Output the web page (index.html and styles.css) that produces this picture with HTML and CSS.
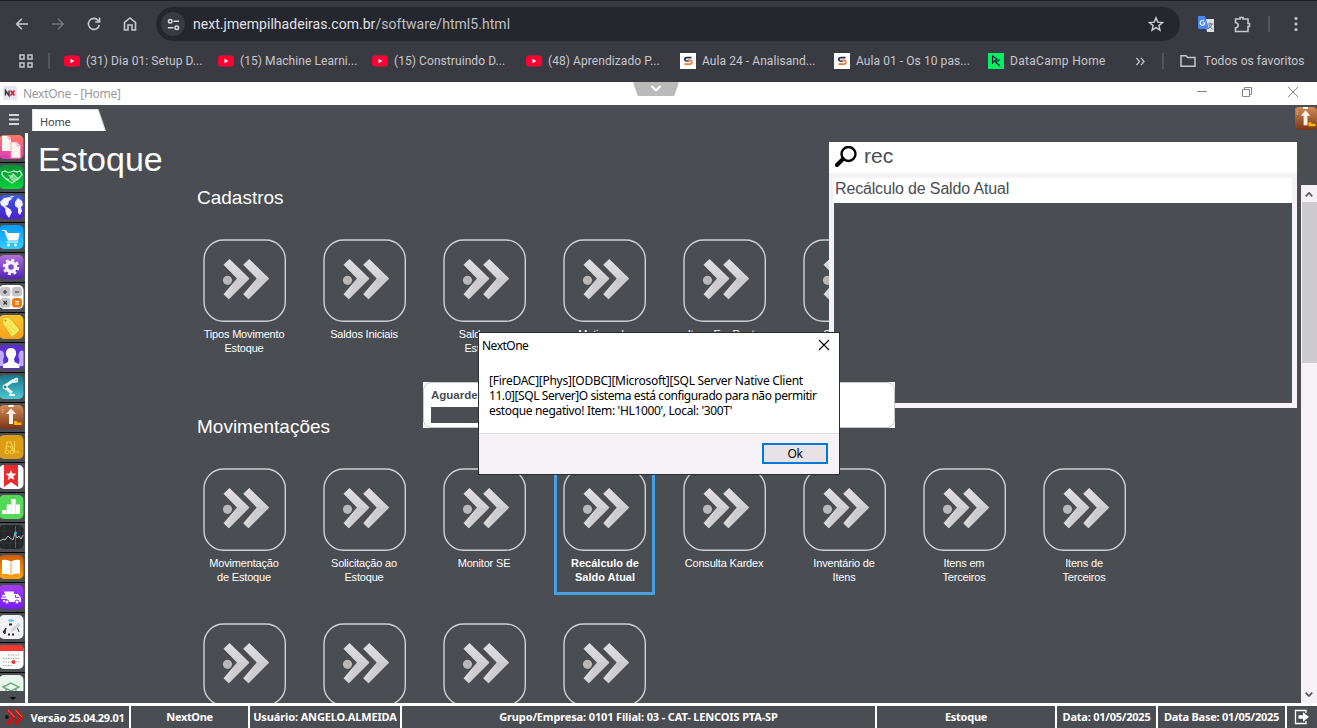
FILE: index.html
```html
<!DOCTYPE html>
<html lang="pt-BR">
<head>
<meta charset="utf-8">
<title>NextOne</title>
<link rel="stylesheet" href="styles.css">
</head>
<body>
<svg class="defs" aria-hidden="true">
  <defs>
    <linearGradient id="steel" x1="0" y1="0" x2="0" y2="1"><stop offset="0" stop-color="#e2dfe2"/><stop offset=".5" stop-color="#d2cfd1"/><stop offset="1" stop-color="#dedbdd"/></linearGradient>
    <linearGradient id="pink" x1="0" y1="0" x2="0" y2="1"><stop offset="0" stop-color="#ff7a62"/><stop offset="1" stop-color="#e13cb8"/></linearGradient>
    <linearGradient id="green" x1="0" y1="0" x2="0" y2="1"><stop offset="0" stop-color="#0a8f35"/><stop offset="1" stop-color="#06d43c"/></linearGradient>
    <linearGradient id="indigo" x1="0" y1="0" x2="0" y2="1"><stop offset="0" stop-color="#3a5be0"/><stop offset="1" stop-color="#4a1fd0"/></linearGradient>
    <linearGradient id="sky" x1="0" y1="0" x2="0" y2="1"><stop offset="0" stop-color="#0099f8"/><stop offset="1" stop-color="#35ccff"/></linearGradient>
    <linearGradient id="violet" x1="0" y1="0" x2="0" y2="1"><stop offset="0" stop-color="#b070d8"/><stop offset="1" stop-color="#5222b8"/></linearGradient>
    <linearGradient id="amber" x1="0" y1="0" x2="0" y2="1"><stop offset="0" stop-color="#f9c52c"/><stop offset="1" stop-color="#f8a01c"/></linearGradient>
    <linearGradient id="teal" x1="0" y1="0" x2="0" y2="1"><stop offset="0" stop-color="#1c7488"/><stop offset="1" stop-color="#4cc8d4"/></linearGradient>
    <linearGradient id="brown" x1="0" y1="0" x2="0" y2="1"><stop offset="0" stop-color="#d08a55"/><stop offset="1" stop-color="#7a3518"/></linearGradient>
    <linearGradient id="orange" x1="0" y1="0" x2="0" y2="1"><stop offset="0" stop-color="#d05a08"/><stop offset="1" stop-color="#ffa502"/></linearGradient>
    <linearGradient id="purple" x1="0" y1="0" x2="0" y2="1"><stop offset="0" stop-color="#a43df5"/><stop offset="1" stop-color="#7a1cf8"/></linearGradient>
    <symbol id="chev" viewBox="0 0 84 84">
      <rect x="1" y="1" width="81.300" height="81.300" rx="19.500" fill="none" stroke="#d0cfd1" stroke-width="1.400"/>
      <circle cx="24.500" cy="41.300" r="4.600" fill="#b9b6b8"/>
      <g id="arrow"><path d="M26.500 20 46.500 39.500 25.800 60.300 20.500 55.300 34 39.500 20.500 25.800Z" fill="url(#steel)"/><path d="M34 39.500H46.500L25.800 60.300 24 58.500Z" fill="#c6c3c5" opacity=".5"/></g>
      <use href="#arrow" x="19.700"/>
    </symbol>
    <symbol id="yt" viewBox="0 0 16 16"><rect y="2.500" width="16" height="11" rx="3" fill="#ff0033"/><path d="M6.500 5.800v4.400L10.300 8Z" fill="#fff"/></symbol>
    <symbol id="aula" viewBox="0 0 16 16"><path fill="#fff" d="M0 0h16v16H0z"/><path d="M11.500 4.700H7C4.200 4.700 4.200 8 6.500 8H9" fill="none" stroke="#292a5a" stroke-width="1.700"/><path d="M7.500 7.300H10c2.400 0 2.400 3.900 0 3.900H4.500" fill="none" stroke="#f47a30" stroke-width="1.700"/></symbol>
    <symbol id="upbox" viewBox="0 0 24 24">
      <rect x="-1" width="24.500" height="24" rx="5" fill="url(#brown)"/><path d="M8.500 0h5v2h-5z" fill="#fff"/><path d="M11 3.500 16 9h-3v10H9V9H6Z" fill="#fff3e8"/><path d="M14 16h3v1.500h4.500V20H14Z" fill="#ffb400"/><path d="M2.500 4v4" stroke="#e3ad87" stroke-width="1.500" stroke-dasharray="1.500 1"/>
    </symbol>
  </defs>
</svg>

<header class="browser">
  <div class="toolbar">
    <svg class="nav" viewBox="0 0 16 16"><path d="M14 8H3M8 2.700 2.700 8 8 13.300"/></svg>
    <svg class="nav dim" viewBox="0 0 16 16"><path d="M2 8h11M8 2.700 13.300 8 8 13.300"/></svg>
    <svg class="nav" viewBox="0 0 16 16"><path d="M13.300 8.800A5.500 5.500 0 1 1 12 4.200L13.500 6M13.600 1.500V6H9.200"/></svg>
    <svg class="nav" viewBox="0 0 16 16"><path d="M2.500 14V6.500L8 2l5.500 4.500V14H10V9H6v5Z"/></svg>
    <div class="address">
      <span class="site"><svg viewBox="0 0 16 16"><circle cx="4.500" cy="4.500" r="1.900"/><path d="M8 4.500h6M2 11.500h6"/><circle cx="11.500" cy="11.500" r="1.900"/></svg></span>
      <span class="url">next.jmempilhadeiras.com.br<span>/software/html5.html</span></span>
      <svg class="star" viewBox="0 0 16 16"><path d="m8 1.800 1.800 4.300 4.700.4-3.600 3.100 1.100 4.600L8 11.700l-4 2.500 1.100-4.600L1.500 6.500l4.700-.4Z"/></svg>
    </div>
    <svg class="translate" viewBox="0 0 16 16"><path d="M7 3h9v13H9Z" fill="#dcdee2"/><path d="M0 0h7l4 13H1.500Q0 13 0 11.500Z" fill="#4a86f0"/><path d="M9.500 8H15M12.200 6.500V8M14 8q-1 3-3.500 4.500M11 9q1 2.500 3.500 4" fill="none" stroke="#68707c"/><path d="M6.200 5.200A2.400 2.400 0 1 0 6.900 7H4.700" fill="none" stroke="#fff" stroke-width="1.100"/></svg>
    <svg class="ext" viewBox="0 0 17 17"><path d="M1.500 3H6V1.500h3V3h5v4.500h1.500v3H14V15.500H1.500V12Q4.200 11.500 4.200 9.300T1.500 6.500Z"/></svg>
    <i class="rule"></i>
    <svg class="dots" viewBox="0 0 4 16"><circle cx="2" cy="2.500" r="1.600"/><circle cx="2" cy="8" r="1.600"/><circle cx="2" cy="13.500" r="1.600"/></svg>
  </div>
  <nav class="bookmarks">
    <svg class="apps" viewBox="0 0 14 14"><path d="M1 1h4v4H1zM9 1h4v4H9zM1 9h4v4H1zM9 9h4v4H9z"/></svg>
    <i class="rule"></i>
    <a class="bm"><svg><use href="#yt"/></svg><span>(31) Dia 01: Setup D...</span></a>
    <a class="bm"><svg><use href="#yt"/></svg><span>(15) Machine Learni...</span></a>
    <a class="bm"><svg><use href="#yt"/></svg><span>(15) Construindo D...</span></a>
    <a class="bm"><svg><use href="#yt"/></svg><span>(48) Aprendizado P...</span></a>
    <a class="bm"><svg><use href="#aula"/></svg><span>Aula 24 - Analisand...</span></a>
    <a class="bm"><svg><use href="#aula"/></svg><span>Aula 01 - Os 10 pas...</span></a>
    <a class="bm camp"><svg viewBox="0 0 16 16"><path fill="#03ef62" d="M0 0h16v16H0z"/><path d="M4.500 11V3l4.500 3-4.500 3.500M12 6.500 7.500 9l4.500 4" fill="none" stroke="#05192d" stroke-width="1.100"/></svg><span>DataCamp Home</span></a>
    <svg class="more" viewBox="0 0 10 10"><path d="m1 1 3.500 4L1 9M6 1l3.500 4L6 9"/></svg>
    <i class="rule"></i>
    <svg class="folder" viewBox="0 0 16 14"><path d="M1 1.800h5l1.600 1.700H15v8.700H1Z"/></svg>
    <span class="all">Todos os favoritos</span>
  </nav>
</header>

<div class="titlebar">
  <svg class="logo" viewBox="0 0 14 14"><rect width="14" height="14" rx="1" fill="#e8e4f0"/><path d="M2.500 9.500v-5l3.500 5v-5" fill="none" stroke="#33333d" stroke-width="1.400"/><path d="m7.500 4.500 4 5M11.500 4.500l-4 5" stroke="#e0142c" stroke-width="1.600"/></svg>
  <span class="app-title">NextOne - [Home]</span>
  <svg class="win" viewBox="0 0 110 12"><path d="M4 5.500h10M49.500 3.500h7v7h-7zM51.500 3V1.500h7v7H57M95 1l10 10M105 1 95 11"/></svg>
  <svg class="handle" viewBox="0 0 46 14"><path d="M0 0h46l-4 12q-.5 2-2 2H6q-1.500 0-2-2Z" fill="#bababa"/><path d="m18.500 4 4.500 4.500L27.500 4" fill="none" stroke="#fff" stroke-width="2.200"/></svg>
</div>

<div class="tabs">
  <svg class="burger" viewBox="0 0 10 11"><path d="M0 1h10M0 5.500h10M0 10h10"/></svg>
  <div class="tab"><svg viewBox="0 0 74 22"><path d="M0 0h66q1 1 1.500 3L74 22H0Z" fill="#e2e2e2"/><path d="M1 1h64q1 0 1.500 2L72.500 22H1Z" fill="#fff"/></svg><span>Home</span></div>
  <svg class="module"><use href="#upbox"/></svg>
</div>

<div class="workspace">
  <aside class="side">
    <div class="icons">
      <div><svg viewBox="0 0 24 24"><rect x="-1" width="24.500" height="24" rx="5" fill="url(#pink)"/><path d="M2 1h6l3 3v12H2z" fill="#fff6f4"/><path d="M11 7h6l3.500 3.500V23H11Z" fill="#fff6f4" stroke="#f58a9a" stroke-width=".8"/><path d="M8 1v3h3M17 7v3.500h3.500" fill="none" stroke="#f8a5a5"/></svg></div>
      <div><svg viewBox="0 0 24 24"><rect x="-1" width="24.500" height="24" rx="5" fill="url(#green)"/><path d="m2 7 3-1 3 1.500L11 7l3-1 3 1 3-1 2 4-4 4-6 4-6-4-4-4Zm3 6 4 2m0-5q2 3 4-1l5 5m-6-3 4 4m-6-3 4 4" fill="none" stroke="#c9f5d0" stroke-width="1.200"/></svg></div>
      <div><svg viewBox="0 0 24 24"><rect x="-1" width="24.500" height="24" rx="5" fill="url(#indigo)"/><path d="m0 7 4-4 6-1 2 2-3 2-1 4-3 1 5 3 2 3-3 6-3-4-1-6-4-3ZM10 1l4 0-2 2ZM15 7l3-4 4 3 1 4-2 2 1 4-2 4-2-2v-5l-3-2Z" fill="#f3f1ff"/></svg></div>
      <div><svg viewBox="0 0 24 24"><rect x="-1" width="24.500" height="24" rx="5" fill="url(#sky)"/><path d="M2 5.500h3.500l2 3H19l-1.500 6.500H8.500L5 6" fill="#fff" stroke="#fff" stroke-width="1.200"/><path d="M6.500 17H18" stroke="#fff"/><circle cx="8.500" cy="20" r="1.400" fill="#fff"/><circle cx="15.500" cy="20" r="1.400" fill="#fff"/></svg></div>
      <div><svg viewBox="0 0 24 24"><rect x="-1" width="24.500" height="24" rx="5" fill="url(#violet)"/><circle cx="11" cy="12" r="4.500" fill="none" stroke="#f7f2fc" stroke-width="3.500"/><circle cx="11" cy="12" r="7" fill="none" stroke="#f7f2fc" stroke-width="2.600" stroke-dasharray="3 2.500"/></svg></div>
      <div><svg viewBox="0 0 24 24"><rect x="-1" width="24.500" height="24" rx="5" fill="#fff"/><rect y="2" width="10.500" height="9.500" rx="3" fill="#c6c4c6"/><rect x="12" y="2" width="10" height="9.500" rx="3" fill="#c6c4c6"/><rect y="13" width="10.500" height="9.500" rx="3" fill="#c6c4c6"/><rect x="12" y="13" width="10" height="9.500" rx="3" fill="#ee7b14"/><path d="M5 5v4M3 7h4M15 7h4M3.500 16l3.500 3.500m0-3.500-3.500 3.500" stroke="#333" stroke-width="1.200"/><path d="M15 16.700h4M15 19h4" stroke="#fff" stroke-width="1.200"/></svg></div>
      <div><svg viewBox="0 0 24 24"><rect x="-1" width="24.500" height="24" rx="5" fill="url(#amber)"/><path d="m2 8 1-5 5-1 3 2 9 11-8 7.500Z" fill="#f6ea5c" stroke="#d6aa20"/><circle cx="5.500" cy="5.500" r="1" fill="#b98712"/><path d="m6 11 6 7M9 9l6 7" stroke="#e6d242"/></svg></div>
      <div><svg viewBox="0 0 24 24"><rect x="-1" width="24.500" height="24" rx="5" fill="#5b2fd8"/><path d="M-1 6q5-2 5 6l-1 3 1 6h-5ZM23.500 6q-5-2-5 6l1 3-1 6h5Z" fill="#c1abf2"/><path d="M11 3c4 0 5.500 3 5 7l-2 4 .5 3 5 2.500V23H3v-3.500L8 17l.3-3L6 10c-.5-4 1-7 5-7Z" fill="#fff"/></svg></div>
      <div><svg viewBox="0 0 24 24"><rect x="-1" width="24.500" height="24" rx="5" fill="url(#teal)"/><path d="m5 11 9-6M6 13l6 5" stroke="#e6f8fa" stroke-width="3"/><path d="M18 4q-4-1-4 3l4-1M9 20h6" fill="none" stroke="#e6f8fa" stroke-width="2"/><circle cx="5" cy="12" r="2" fill="#26889a" stroke="#fff"/></svg></div>
      <div><svg><use href="#upbox"/></svg></div>
      <div><svg viewBox="0 0 24 24"><rect x="-1" width="24.500" height="24" rx="5" fill="#dc9c16"/><path d="M6 15l1-8h4l2.500 8M5.500 11.500H10l3 3M14.500 6v11H19" fill="none" stroke="#f6cd47" stroke-width="1.200"/><circle cx="7" cy="17" r="1.800" fill="#dc9c16" stroke="#f6cd47"/><circle cx="12" cy="17" r="1.800" fill="#dc9c16" stroke="#f6cd47"/></svg></div>
      <div><svg viewBox="0 0 24 24"><rect x="-1" width="24.500" height="24" rx="5" fill="#fff"/><path d="M4 0h14v22l-7-5-7 5Z" fill="#ee2b2e"/><path d="m11 5 1.500 3.500 3.800.3-3 2.500 1 3.700-3.300-2-3.300 2 1-3.700-3-2.500 3.800-.3Z" fill="#fff"/></svg></div>
      <div><svg viewBox="0 0 24 24"><rect x="-1" width="24.500" height="24" rx="5" fill="#54d858"/><path d="M2 15h4.500v4H2zM6.700 9.500h4.400V19H6.700zM11.300 4h4.400v15h-4.400zM16 9.500h4V19h-4z" fill="#fff"/></svg></div>
      <div><svg viewBox="0 0 24 24"><rect x="-1" width="24.500" height="24" rx="5" fill="#252628"/><path d="M4 0v24M10 0v24M20 0v24M0 6h23M0 18h23" stroke="#3b3c40" stroke-width=".6"/><path d="M15.500 1v22" stroke="#167a96"/><path d="m0 16 3-2 2 1 3-4 2 2 3 2 2-7 2 5 2-2 2 3 2-4" fill="none" stroke="#b9bdc0"/><circle cx="15.500" cy="8" r="1.500" fill="#27bddd"/></svg></div>
      <div><svg viewBox="0 0 24 24"><rect x="-1" width="24.500" height="24" rx="5" fill="url(#orange)"/><path d="M2 5q5-1 9 1.500Q15 4 20 5v14q-5-1-9 1-4-2-9-1Z" fill="#fff"/><path d="M11 7v12" stroke="#e99a55"/></svg></div>
      <div><svg viewBox="0 0 24 24"><rect x="-1" width="24.500" height="24" rx="5" fill="url(#purple)"/><path d="M4 6.500h10V9h4l3 4v4H3v-2h4v-1H1v-1.500h5v-1H2V10h3Z" fill="#fff"/><path d="M15.500 10v2.500h3.500" fill="none" stroke="#9439ef"/><circle cx="7" cy="17" r="2" fill="#fff" stroke="#8a2af6"/><circle cx="17" cy="17" r="2" fill="#fff" stroke="#8a2af6"/></svg></div>
      <div><svg viewBox="0 0 24 24"><rect x="-1" width="24.500" height="24" rx="5" fill="#f2f2f4"/><ellipse cx="11" cy="5.500" rx="3" ry="1.300" fill="#62c4ee"/><path d="m3 17 3-4-1 6ZM17 12l2 5" fill="#333" stroke="#333"/><path d="M9 9.500h3M8 19.500h2M12 19.500h2" stroke="#222" stroke-width="2"/><path d="m11 16 9-7" stroke="#d5d5d8" stroke-width="3"/></svg></div>
      <div><svg viewBox="0 0 24 24"><rect x="-1" width="24.500" height="24" rx="5" fill="#fff"/><path d="M-1 6V3q0-3 4-3h16q4.500 0 4.500 4v2Z" fill="#ee3830"/><path d="M8 10h12M3 13.500h17M3 17h17M3 20.500h10" stroke="#8b8b8f" stroke-width="1.200" stroke-dasharray="1.200 1.300"/><circle cx="13.500" cy="17" r="2" fill="#f03a30"/></svg></div>
      <div><svg viewBox="0 0 24 24"><rect x="-1" width="24.500" height="24" rx="5" fill="#e9f4ea"/><path d="m3 12 8-4 8 4-8 4Zm3 2v5q5 2 10 0v-5" fill="none" stroke="#71a983" stroke-width="1.400"/></svg></div>
    </div>
    <svg class="down" viewBox="0 0 6 3"><path d="M0 0h6L3 3Z"/></svg>
  </aside>

  <main>
    <h1>Estoque</h1>
    <div class="scroller">
      <div class="content">
        <section>
          <h2>Cadastros</h2>
          <div class="tiles">
            <div class="tile"><svg><use href="#chev"/></svg><p>Tipos Movimento<br>Estoque</p></div>
            <div class="tile"><svg><use href="#chev"/></svg><p>Saldos Iniciais</p></div>
            <div class="tile"><svg><use href="#chev"/></svg><p>Saldos em<br>Estoque</p></div>
            <div class="tile"><svg><use href="#chev"/></svg><p>Motivos de</p></div>
            <div class="tile"><svg><use href="#chev"/></svg><p>Itens Em Ponto</p></div>
            <div class="tile"><svg><use href="#chev"/></svg><p>Consulta</p></div>
          </div>
        </section>
        <section>
          <h2>Movimentações</h2>
          <div class="tiles">
            <div class="tile"><svg><use href="#chev"/></svg><p>Movimentação<br>de Estoque</p></div>
            <div class="tile"><svg><use href="#chev"/></svg><p>Solicitação ao<br>Estoque</p></div>
            <div class="tile"><svg><use href="#chev"/></svg><p>Monitor SE</p></div>
            <div class="tile selected"><svg><use href="#chev"/></svg><p>Recálculo de<br>Saldo Atual</p></div>
            <div class="tile"><svg><use href="#chev"/></svg><p>Consulta Kardex</p></div>
            <div class="tile"><svg><use href="#chev"/></svg><p>Inventário de<br>Itens</p></div>
            <div class="tile"><svg><use href="#chev"/></svg><p>Itens em<br>Terceiros</p></div>
            <div class="tile"><svg><use href="#chev"/></svg><p>Itens de<br>Terceiros</p></div>
            <div class="tile"><svg><use href="#chev"/></svg></div>
            <div class="tile"><svg><use href="#chev"/></svg></div>
            <div class="tile"><svg><use href="#chev"/></svg></div>
            <div class="tile"><svg><use href="#chev"/></svg></div>
          </div>
        </section>
      </div>
      <div class="scrollbar">
        <svg viewBox="0 0 8 5"><path d="M.7 4.300 4 1l3.300 3.300"/></svg>
        <i></i>
        <svg viewBox="0 0 8 5"><path d="M.7.700 4 4 7.300.700"/></svg>
      </div>
    </div>
  </main>
</div>

<footer>
  <div class="c1"><svg viewBox="0 0 20 18"><circle cx="2" cy="9" r="2" fill="#151515"/><g id="red"><path d="M4 0 11.500 9 4 18 1 15.500 7 9 1 2.500Z" fill="#d01310"/><path d="m3 1.500 7 7.500" stroke="#ff7a68"/></g><use href="#red" x="8"/></svg><span>Versão 25.04.29.01</span></div>
  <div class="c2"><span>NextOne</span></div>
  <div class="c3"><span>Usuário: ANGELO.ALMEIDA</span></div>
  <div class="c4"><span>Grupo/Empresa: 0101 Filial: 03 - CAT- LENCOIS PTA-SP</span></div>
  <div class="c5"><span>Estoque</span></div>
  <div class="c6"><span>Data: 01/05/2025</span></div>
  <div class="c7"><span>Data Base: 01/05/2025</span></div>
  <div class="c8"><svg viewBox="0 0 16 16"><path d="M12 4V1.500H1.500v13H12V12" fill="none" stroke="#fff" stroke-width="1.300"/><path d="M4.500 6.200H9V3.200L15 8l-6 4.800V9.800H4.500Z" fill="#fff"/></svg></div>
</footer>

<div class="search">
  <div class="query"><svg viewBox="0 0 22 22"><circle cx="13.500" cy="8" r="7" fill="none" stroke="#000" stroke-width="2.400"/><path d="m8 13-6 6" stroke="#000" stroke-width="4" stroke-linecap="round"/></svg><span>rec</span></div>
  <div class="results"><div>Recálculo de Saldo Atual</div></div>
</div>

<div class="wait"><div><b>Aguarde</b><i></i></div></div>

<div class="dialog">
  <div class="dialog-title"><span>NextOne</span><svg viewBox="0 0 12 12"><path d="m1 1 10 10M11 1 1 11"/></svg></div>
  <p><span class="m1">[FireDAC][Phys][ODBC][Microsoft][SQL Server Native Client</span><br><span class="m2">11.0][SQL Server]O sistema está configurado para não permitir</span><br><span class="m3">estoque negativo! Item: 'HL1000', Local: '300T'</span></p>
  <div class="actions"><button>Ok</button></div>
</div>
</body>
</html>
```
FILE: styles.css
```css
*, *::after { box-sizing: border-box; }
body { margin: 0; width: 1317px; height: 728px; overflow: hidden; display: flex; flex-direction: column; position: relative; background: #4a4d51; font-family: "Noto Sans", sans-serif; }
svg { display: block; flex: none; }
.defs { position: absolute; width: 0; height: 0; }
h1, h2, p { margin: 0; font-weight: 400; }

/* browser chrome */
.browser { height: 82px; flex: none; background: #3a3b42; border-top: 1px solid #1d1f2a; font-family: Roboto, sans-serif; color: #c7c8cc; }
.toolbar { height: 46px; display: flex; align-items: center; padding-left: 14px; }
.nav { width: 16px; height: 16px; margin-right: 20px; fill: none; stroke: #c7c8cc; stroke-width: 1.6; }
.nav.dim { stroke: #74757b; }
.address { width: 1024px; height: 34px; margin-left: -2px; border-radius: 17px; background: #25272f; display: flex; align-items: center; padding: 0 16px 0 5px; }
.site { width: 24px; height: 24px; border-radius: 50%; background: #3a3b42; display: flex; align-items: center; justify-content: center; }
.site svg { width: 15px; height: 15px; fill: none; stroke: #d8d9dc; stroke-width: 1.6; }
.url { margin-left: 8px; font-size: 14px; letter-spacing: .04px; color: #e1e2e6; flex: 1; }
.url span { color: #bfc0c5; }
.star { width: 16px; height: 16px; fill: none; stroke: #cfd0d4; stroke-width: 1.4; }
.translate { width: 16px; height: 16px; margin-left: 18px; }
.ext { width: 17px; height: 17px; margin-left: 20px; fill: none; stroke: #c7c8cc; stroke-width: 1.6; }
.rule { width: 2px; height: 16px; background: #54565e; flex: none; }
.toolbar .rule { margin-left: 17px; }
.dots { width: 4px; height: 16px; margin-left: 24px; fill: #c7c8cc; }
.bookmarks { height: 28px; display: flex; align-items: center; padding-left: 19px; font-size: 12px; letter-spacing: .07px; white-space: nowrap; }
.apps { width: 14px; height: 14px; fill: none; stroke: #c7c8cc; stroke-width: 1.5; }
.bookmarks .rule { margin: 0 14px 0 15px; }
.bm { display: flex; align-items: center; gap: 6px; width: 154px; flex: none; }
.bm svg { width: 16px; height: 16px; }
.camp { width: 147px; letter-spacing: .3px; }
.more { width: 10px; height: 9px; fill: none; stroke: #c7c8cc; stroke-width: 1.4; }
.bookmarks .more + .rule { margin: 0 16px 0 17px; }
.folder { width: 16px; height: 14px; margin-right: 8px; fill: none; stroke: #c7c8cc; stroke-width: 1.5; }

/* application window */
.titlebar { height: 23px; flex: none; background: #fff; display: flex; align-items: center; padding-left: 3px; position: relative; }
.logo { width: 14px; height: 14px; margin-top: -1px; }
.app-title { margin-left: 6px; font-size: 12px; letter-spacing: -.27px; color: #999; flex: 1; }
.win { width: 110px; height: 12px; margin: -3px 14px 0 0; fill: none; stroke: #858585; stroke-width: 1; }
.handle { position: absolute; left: 633px; top: 0; width: 46px; height: 14px; }
.tabs { height: 28px; flex: none; display: flex; align-items: flex-start; padding-left: 9px; }
.burger { width: 10px; height: 11px; margin-top: 9px; stroke: #d8d5d8; stroke-width: 2; }
.tab { width: 74px; height: 22px; margin: 4px 0 0 13px; position: relative; font-size: 11px; color: #444; }
.tab svg { position: absolute; inset: 0; width: 74px; height: 22px; }
.tab span { position: relative; display: block; padding-left: 8px; line-height: 26px; letter-spacing: -.2px; }
.module { width: 23px; height: 23px; margin: 2px -1px 0 auto; }
.workspace { height: 570px; flex: none; display: flex; }
.side { width: 28px; flex: none; border-right: 3px solid #fff; display: flex; flex-direction: column; align-items: center; }
.icons { width: 25px; height: 558px; overflow: hidden; }
.icons div { height: 30px; padding-top: 2px; border-bottom: 1px solid #000; }
.icons svg { width: 24px; height: 24px; }
.down { width: 6px; height: 3px; margin-top: 6px; fill: #000; }
main { flex: 1; min-width: 0; display: flex; flex-direction: column; color: #fff; font-family: "Liberation Sans", Arial, sans-serif; }
h1 { height: 52px; flex: none; padding-left: 10px; font-size: 34px; line-height: 53px; }
.scroller { flex: 1; min-height: 0; display: flex; }
.content { flex: 1; min-width: 0; overflow: hidden; padding: 2px 0 0 156px; }
section { height: 229px; }
h2 { font-size: 19px; line-height: 22px; height: 52px; padding-left: 13px; }
.tiles { display: grid; grid-template-columns: repeat(8, 120px); grid-auto-rows: 155px; }
.tile { display: flex; flex-direction: column; align-items: center; position: relative; padding-left: 2px; }
.tile svg { width: 84px; height: 84px; }
.tile p { margin-top: 4px; margin-left: -2px; font-size: 11px; line-height: 14px; letter-spacing: -.18px; text-align: center; white-space: nowrap; }
.tile.selected p { font-weight: 700; letter-spacing: 0; margin-left: 0; }
.tile.selected::after { content: ""; position: absolute; left: 10px; top: -9px; width: 101px; height: 136px; border: 3px solid #479fe6; }
.scrollbar { width: 16px; flex: none; background: #f5f1f5; display: flex; flex-direction: column; align-items: center; }
.scrollbar svg { width: 8px; height: 5px; margin-top: 7px; fill: none; stroke: #555; stroke-width: 1.700; }
.scrollbar i { width: 15px; height: 161px; margin-top: 5px; background: #cdcbcd; align-self: flex-end; }
.scrollbar svg:last-child { margin: auto 0 6px; }

footer { height: 25px; flex: none; border-top: 3px solid #fff; display: flex; font-size: 11px; font-weight: 700; color: #fff; white-space: nowrap; }
footer div { display: flex; align-items: center; justify-content: center; border-right: 2px solid #fff; }
footer span { margin-top: -2px; }
.c1 { width: 131px; letter-spacing: -.33px; }
.c2 { width: 119px; letter-spacing: -.35px; }
.c3 { width: 152px; letter-spacing: -.13px; }
.c4 { width: 475px; letter-spacing: -.14px; }
.c5 { width: 180px; letter-spacing: -.25px; }
.c6 { width: 101px; letter-spacing: -.22px; }
.c7 { width: 129px; letter-spacing: -.24px; }
footer .c8 { width: 30px; border: 0; }
.c1 svg { width: 19px; height: 18px; margin-right: 7px; }
.c1 span { margin-top: 0; }
.c8 svg { width: 16px; height: 16px; }

/* overlays */
.search { position: absolute; left: 829px; top: 142px; width: 468px; height: 266px; background: #f7f2f6; font-family: "Liberation Sans", Arial, sans-serif; color: #4a4d51; }
.query { height: 31px; background: #fff; display: flex; align-items: center; padding-left: 6px; font-size: 21px; }
.query svg { width: 22px; height: 22px; margin: -2px 7px 0 0; }
.query span { margin-top: -3px; }
.results { margin: 5px; height: 225px; background: #4a4d51; }
.results div { height: 25px; background: #fff; padding-left: 1px; font-size: 16px; letter-spacing: -.16px; line-height: 21px; }
.wait { position: absolute; left: 423px; top: 382px; width: 472px; height: 46px; background: #fff; }
.wait > div { height: 46px; border: 1px solid #c6c6c8; border-radius: 8px; padding: 5px 7px; font-family: "Liberation Sans", Arial, sans-serif; font-size: 11.5px; line-height: 15px; color: #4a4d51; }
.wait i { display: block; width: 250px; height: 16px; margin-top: 4px; background: #4a4d51; }
.dialog { position: absolute; left: 478px; top: 332px; width: 362px; height: 143px; border: 1px solid #2d2e31; background: #fff; color: #000; display: flex; flex-direction: column; font-size: 12px; }
.dialog-title { display: flex; align-items: center; justify-content: space-between; height: 24px; padding: 0 9px 0 3px; letter-spacing: -.5px; }
.dialog-title svg { width: 12px; height: 12px; stroke: #000; stroke-width: 1.100; }
.dialog p { padding: 16px 0 0 10px; line-height: 15px; white-space: nowrap; flex: 1; font-size: 12px; }
.m1 { letter-spacing: -.27px; }
.m2 { letter-spacing: -.43px; }
.m3 { letter-spacing: -.35px; }
.actions { height: 41px; background: #f7f2f6; border-top: 1px solid #dcdcdc; display: flex; justify-content: flex-end; padding: 9px 11px 0 0; }
button { width: 66px; height: 21px; border: 2px solid #0078d7; background: #e6e2e6; font: 12px "Noto Sans", sans-serif; letter-spacing: -.3px; padding: 0; line-height: 16px; color: #000; }
```
